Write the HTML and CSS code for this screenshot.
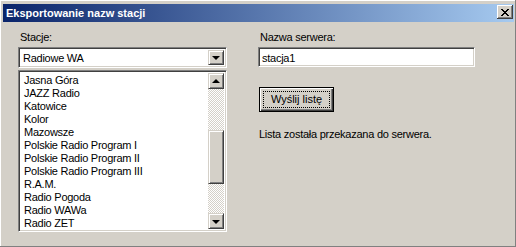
FILE: index.html
```html
<!DOCTYPE html>
<html lang="pl">
<head>
  <meta charset="UTF-8">
  <title>Eksportowanie nazw stacji</title>
  <link rel="stylesheet" href="styles.css">
</head>
<body>
  <div class="window">
    <div class="titlebar">
      <span class="title">Eksportowanie nazw stacji</span>
      <button class="close" type="button">
        <svg width="8" height="7" viewBox="0 0 8 7"><path d="M0 0h2v1H0zM6 0h2v1H6zM1 1h2v1H1zM5 1h2v1H5zM2 2h4v1H2zM3 3h2v1H3zM2 4h4v1H2zM1 5h2v1H1zM5 5h2v1H5zM0 6h2v1H0zM6 6h2v1H6z" fill="#000"/></svg>
      </button>
    </div>
    <div class="content">
      <div class="col left">
        <label class="label">Stacje:</label>
        <div class="combo sunken">
          <span class="combo-text">Radiowe WA</span>
          <span class="btn3d arrow-btn"><span class="tri down"></span></span>
        </div>
        <div class="listbox sunken">
          <ul class="items">
            <li>Jasna Góra</li>
            <li>JAZZ Radio</li>
            <li>Katowice</li>
            <li>Kolor</li>
            <li>Mazowsze</li>
            <li>Polskie Radio Program I</li>
            <li>Polskie Radio Program II</li>
            <li>Polskie Radio Program III</li>
            <li>R.A.M.</li>
            <li>Radio Pogoda</li>
            <li>Radio WAWa</li>
            <li>Radio ZET</li>
          </ul>
          <div class="scrollbar">
            <span class="btn3d sb-btn"><span class="tri up"></span></span>
            <span class="track" style="height: 41px"></span>
            <span class="btn3d thumb" style="height: 54px"></span>
            <span class="track grow"></span>
            <span class="btn3d sb-btn"><span class="tri down"></span></span>
          </div>
        </div>
      </div>
      <div class="col right">
        <label class="label">Nazwa serwera:</label>
        <div class="textbox sunken">stacja1</div>
        <button class="send" type="button"><span class="focus">Wyślij listę</span></button>
        <p class="status">Lista została przekazana do serwera.</p>
      </div>
    </div>
  </div>
</body>
</html>
```

FILE: styles.css
```css
body {
  margin: 0;
  font-family: "Liberation Sans", Arial, sans-serif;
  font-size: 11px;
  letter-spacing: -0.25px;
  color: #000;
  background: #d4d0c8;
}
.window {
  width: 516px;
  height: 247px;
  box-sizing: border-box;
  background: #d4d0c8;
  border-right: 1px solid #808080;
  border-bottom: 1px solid #808080;
  box-shadow: inset 1px 1px #fff;
  padding: 4px 1px 0 3px;
}
.titlebar {
  height: 18px;
  display: flex;
  align-items: flex-start;
  justify-content: space-between;
  background: linear-gradient(to right, #0a246a, #a6caf0);
}
.title {
  color: #fff;
  font-weight: bold;
  font-size: 11px;
  letter-spacing: 0;
  line-height: 18px;
  padding-left: 3px;
}
.close {
  width: 16px;
  height: 14px;
  margin: 1px 1px 0 0;
  padding: 0;
  border: 0;
  background: #d4d0c8;
  box-shadow: inset -1px -1px #404040, inset 1px 1px #fff, inset -2px -2px #808080;
  display: flex;
  align-items: center;
  justify-content: center;
}
.close svg {
  display: block;
  margin-left: -1px;
}
.content {
  display: flex;
  gap: 31px;
  padding: 7px 0 0 15px;
}
.col {
  display: flex;
  flex-direction: column;
}
.left { width: 209px; }
.right { width: 217px; }
.label {
  line-height: 13px;
  height: 13px;
  margin: 2px 0 3px 2px;
}
.sunken {
  box-sizing: border-box;
  background: #fff;
  border: 1px solid;
  border-color: #808080 #fff #fff #808080;
  box-shadow: inset 1px 1px #404040, inset -1px -1px #d4d0c8;
}
.btn3d {
  box-sizing: border-box;
  background: #d4d0c8;
  border: 1px solid;
  border-color: #d4d0c8 #404040 #404040 #d4d0c8;
  box-shadow: inset 1px 1px #fff, inset -1px -1px #808080;
  display: flex;
  align-items: center;
  justify-content: center;
}
.combo {
  height: 21px;
  display: flex;
  align-items: stretch;
  padding: 2px;
}
.combo-text {
  flex: 1;
  line-height: 17px;
  padding-left: 2px;
}
.arrow-btn {
  width: 16px;
}
.tri {
  width: 0;
  height: 0;
  border-left: 4px solid transparent;
  border-right: 4px solid transparent;
}
.tri.down {
  border-top: 4px solid #000;
  margin-top: 1px;
}
.tri.up {
  border-bottom: 4px solid #000;
  margin-top: -1px;
}
.listbox {
  margin-top: 2px;
  height: 162px;
  display: flex;
  padding: 2px;
}
.items {
  flex: 1;
  list-style: none;
  margin: 0;
  padding: 1px 0 0 3px;
  overflow: hidden;
}
.items li {
  line-height: 13px;
  height: 13px;
}
.scrollbar {
  width: 16px;
  display: flex;
  flex-direction: column;
}
.sb-btn {
  height: 16px;
  flex: none;
}
.thumb {
  flex: none;
}
.track {
  flex: none;
  background: repeating-conic-gradient(#fff 0 25%, #d4d0c8 0 50%) 0 0 / 2px 2px;
}
.track.grow {
  flex: 1;
}
.textbox {
  height: 20px;
  line-height: 16px;
  padding: 2px 3px;
}
.send {
  width: 75px;
  height: 25px;
  margin: 20px 0 0 1px;
  padding: 3px;
  font: inherit;
  background: #d4d0c8;
  border: 1px solid #000;
  box-shadow: inset 1px 1px #fff, inset -1px -1px #404040, inset -2px -2px #808080;
  display: flex;
}
.focus {
  flex: 1;
  outline: 1px dotted #000;
  outline-offset: -1px;
  line-height: 17px;
  text-align: center;
}
.status {
  margin: 16px 0 0 1px;
  line-height: 13px;
}
```
